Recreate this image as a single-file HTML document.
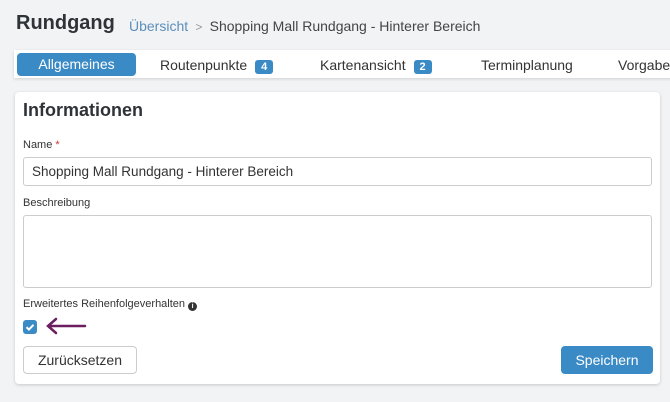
<!DOCTYPE html>
<html><head><style>
*{box-sizing:border-box;margin:0;padding:0}
body{width:670px;height:402px;overflow:hidden;background:#f2f3f5;font-family:"Liberation Sans",sans-serif;color:#333;position:relative}
.a{position:absolute}
</style></head><body>
<div class="a" style="left:16px;top:12px;font-size:20px;font-weight:bold;color:#2f3338">Rundgang</div>
<div class="a" style="left:129px;top:18px;font-size:14px;color:#444"><span style="color:#5b8fba">Übersicht</span> <span style="color:#999;font-size:12px">&nbsp;&gt;&nbsp;</span> Shopping Mall Rundgang - Hinterer Bereich</div>
<div class="a" style="left:14px;top:50px;width:660px;height:28px;background:#fff;box-shadow:0 1px 3px rgba(0,0,0,.15)"></div>
<div class="a" style="left:17px;top:53px;width:119px;height:23px;background:#3a8ac6;border-radius:4px;color:#fff;font-size:14px;text-align:center;line-height:23px">Allgemeines</div>
<div class="a" style="left:160px;top:57px;font-size:14px">Routenpunkte <span style="display:inline-block;background:#3a8ac6;color:#fff;font-size:11px;font-weight:bold;padding:1px 6px;border-radius:3px;margin-left:4px">4</span></div>
<div class="a" style="left:320px;top:57px;font-size:14px">Kartenansicht <span style="display:inline-block;background:#3a8ac6;color:#fff;font-size:11px;font-weight:bold;padding:1px 6px;border-radius:3px;margin-left:4px">2</span></div>
<div class="a" style="left:481px;top:57px;font-size:14px">Terminplanung</div>
<div class="a" style="left:618px;top:57px;font-size:14px">Vorgaben</div>
<div class="a" style="left:15px;top:92px;width:645px;height:292px;background:#fff;border-radius:4px;box-shadow:0 1px 3px rgba(0,0,0,.18)"></div>
<div class="a" style="left:23px;top:100px;font-size:18px;font-weight:bold;color:#2f3338">Informationen</div>
<div class="a" style="left:23px;top:139px;font-size:11px">Name <span style="color:#c33">*</span></div>
<div class="a" style="left:23px;top:157px;width:629px;height:29px;border:1px solid #ccc;border-radius:3px;font-size:13.5px;padding:6px 8px">Shopping Mall Rundgang - Hinterer Bereich</div>
<div class="a" style="left:23px;top:197px;font-size:11px">Beschreibung</div>
<div class="a" style="left:23px;top:215px;width:629px;height:73px;border:1px solid #ccc;border-radius:3px"></div>
<div class="a" style="left:23px;top:298px;font-size:11px">Erweitertes Reihenfolgeverhalten <span style="display:inline-block;width:9px;height:9px;border-radius:50%;background:#333;color:#fff;font-size:7px;text-align:center;line-height:9px;font-weight:bold;vertical-align:-1px">i</span></div>
<div class="a" style="left:23px;top:320px;width:14px;height:14px;background:#3a8ac6;border-radius:3px"><svg width="14" height="14"><path d="M3.5 7.2l2.4 2.4 4.6-4.8" stroke="#fff" stroke-width="2" fill="none"/></svg></div>
<svg class="a" style="left:45px;top:317px" width="42" height="18"><path d="M40 9H4M11 2L3 9l8 7" stroke="#6b1f5e" stroke-width="2.5" fill="none" stroke-linecap="round"/></svg>
<div class="a" style="left:23px;top:346px;width:114px;height:28px;border:1px solid #ccc;border-radius:4px;font-size:14px;text-align:center;line-height:26px">Zurücksetzen</div>
<div class="a" style="left:561px;top:346px;width:92px;height:28px;background:#3a8ac6;border-radius:4px;font-size:14px;color:#fff;text-align:center;line-height:28px">Speichern</div>
</body></html>
